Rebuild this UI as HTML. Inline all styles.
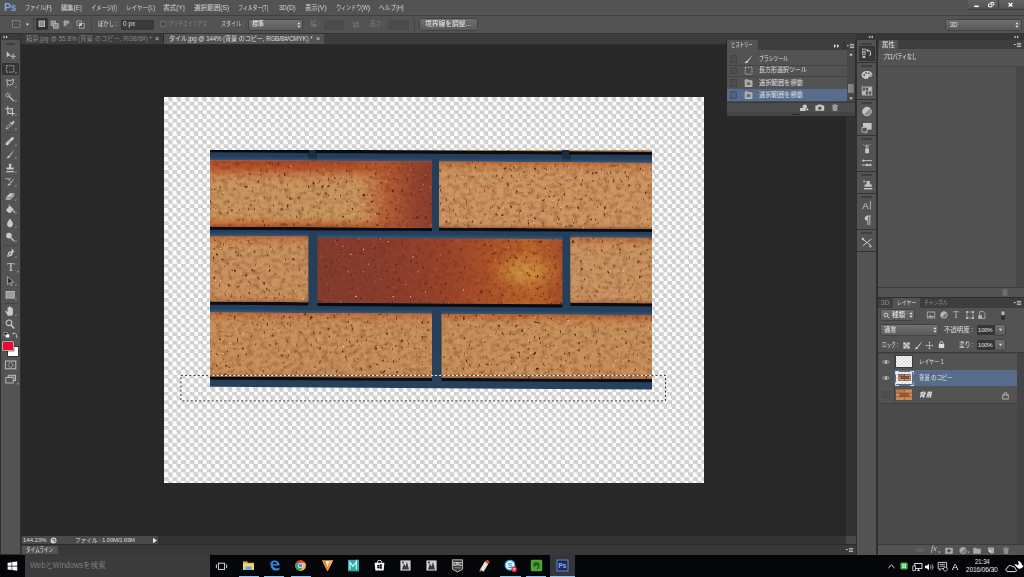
<!DOCTYPE html>
<html lang="ja">
<head>
<meta charset="utf-8">
<title>Photoshop</title>
<style>
html,body{margin:0;padding:0;background:#282828;overflow:hidden}
#app{position:relative;width:1024px;height:577px;overflow:hidden;background:#282828;font-family:"Liberation Sans","Noto Sans CJK JP",sans-serif}
#app div,#app svg,#app span.t{position:absolute;display:block}
#app span.t{white-space:nowrap;line-height:1;transform-origin:0 50%;will-change:transform}

</style>
</head>
<body>
<div id="app">
<div style="left:0px;top:0px;width:1024px;height:16px;background:#535353;"></div>
<div style="left:0px;top:15.3px;width:1024px;height:1px;background:#404040;"></div>
<span class="t" style="left:3.6px;top:2.30px;font-size:10.8px;color:#7eaade;transform:scaleX(0.952);font-weight:bold;letter-spacing:-0.3px">Ps</span>
<span class="t" style="left:25px;top:4.50px;font-size:6.8px;color:#dadada;transform:scaleX(0.739);">ファイル(F)</span>
<span class="t" style="left:61px;top:4.50px;font-size:6.8px;color:#dadada;transform:scaleX(0.927);">編集(E)</span>
<span class="t" style="left:91px;top:4.50px;font-size:6.8px;color:#dadada;transform:scaleX(0.777);">イメージ(I)</span>
<span class="t" style="left:126px;top:4.50px;font-size:6.8px;color:#dadada;transform:scaleX(0.822);">レイヤー(L)</span>
<span class="t" style="left:163px;top:4.50px;font-size:6.8px;color:#dadada;transform:scaleX(0.971);">書式(Y)</span>
<span class="t" style="left:194px;top:4.50px;font-size:6.8px;color:#dadada;transform:scaleX(0.966);">選択範囲(S)</span>
<span class="t" style="left:238px;top:4.50px;font-size:6.8px;color:#dadada;transform:scaleX(0.717);">フィルター(T)</span>
<span class="t" style="left:278.5px;top:4.50px;font-size:6.8px;color:#dadada;transform:scaleX(0.910);">3D(D)</span>
<span class="t" style="left:304.7px;top:4.50px;font-size:6.8px;color:#dadada;transform:scaleX(0.940);">表示(V)</span>
<span class="t" style="left:335.5px;top:4.50px;font-size:6.8px;color:#dadada;transform:scaleX(0.745);">ウィンドウ(W)</span>
<span class="t" style="left:378.5px;top:4.50px;font-size:6.8px;color:#dadada;transform:scaleX(0.838);">ヘルプ(H)</span>
<div style="left:968px;top:0px;width:56px;height:9.6px;background:#3c3c3c;"></div>
<div style="left:968.4px;top:0px;width:14.399999999999977px;height:9.2px;background:linear-gradient(#626262,#545454);"></div>
<div style="left:983.4px;top:0px;width:14.800000000000068px;height:9.2px;background:linear-gradient(#626262,#545454);"></div>
<div style="left:998.8px;top:0px;width:25.200000000000045px;height:9.2px;background:linear-gradient(#626262,#545454);"></div>
<svg style="left:968px;top:0px;" width="56" height="10" viewBox="0 0 56 10"><path d="M6.200 6.300h4.600" stroke="#fff" stroke-width="1.500"/><path d="M20.600 4h3.400v2.800h-3.400z M22.400 2.600h3.400v2.800" fill="none" stroke="#fff" stroke-width="1"/><path d="M40.600 3l3.800 3.400M44.400 3l-3.800 3.400" stroke="#fff" stroke-width="1.300"/></svg>
<div style="left:0px;top:16.3px;width:1024px;height:16.3px;background:#535353;"></div>
<div style="left:0px;top:32.6px;width:1024px;height:0.6px;background:#2e2e2e;"></div>
<svg style="left:11px;top:19px;" width="12" height="11" viewBox="0 0 12 11"><rect x="1.5" y="1.5" width="7.5" height="7" fill="none" stroke="#9a9a9a" stroke-width="0.9" stroke-dasharray="1.6 1.1"/></svg>
<svg style="left:25px;top:22px;" width="5" height="5" viewBox="0 0 5 5"><path d="M0.6 1.4h3.6L2.4 3.8z" fill="#cfcfcf"/></svg>
<div style="left:33px;top:18px;width:0.6px;height:13px;background:#444;"></div>
<div style="left:36px;top:18.3px;width:11.8px;height:11.6px;background:#333;border-radius:1px"></div>
<svg style="left:38px;top:20px;" width="8" height="8" viewBox="0 0 8 8"><rect x="1" y="1" width="5.6" height="5.4" fill="#8a8a8a" stroke="#c8c8c8" stroke-width="0.8"/></svg>
<svg style="left:50px;top:19.5px;" width="10" height="10" viewBox="0 0 10 10"><rect x="1" y="1" width="4.6" height="4.6" fill="#8a8a8a" stroke="#bdbdbd" stroke-width="0.7"/><rect x="3.6" y="3.6" width="4.6" height="4.6" fill="#8a8a8a" stroke="#bdbdbd" stroke-width="0.7"/></svg>
<svg style="left:63px;top:19.5px;" width="10" height="10" viewBox="0 0 10 10"><path d="M1 1h4.6v2.6H3.6v2H1z" fill="#9a9a9a" stroke="#bdbdbd" stroke-width="0.6"/><rect x="3.8" y="3.8" width="4.2" height="4.2" fill="none" stroke="#6c6c6c" stroke-width="0.6"/></svg>
<svg style="left:76px;top:19.5px;" width="10" height="10" viewBox="0 0 10 10"><rect x="1" y="1" width="4.6" height="4.6" fill="none" stroke="#bdbdbd" stroke-width="0.7"/><rect x="3.6" y="3.6" width="4.6" height="4.6" fill="none" stroke="#bdbdbd" stroke-width="0.7"/><rect x="3.6" y="3.6" width="2" height="2" fill="#ccc"/></svg>
<div style="left:91px;top:18px;width:0.6px;height:13px;background:#444;"></div>
<span class="t" style="left:98px;top:20.90px;font-size:6.8px;color:#dadada;transform:scaleX(0.786);">ぼかし :</span>
<div style="left:121px;top:19.5px;width:33px;height:10px;background:#3a3a3a;box-shadow:inset 0 0.6px 0 #2c2c2c;border-radius:1px"></div>
<span class="t" style="left:123px;top:21.20px;font-size:6.6px;color:#e4e4e4;transform:scaleX(0.962);">0 px</span>
<div style="left:160.3px;top:21.3px;width:6px;height:6px;background:#4a4a4a;border:0.6px solid #6a6a6a;box-sizing:border-box"></div>
<span class="t" style="left:169px;top:21.00px;font-size:6.6px;color:#858585;transform:scaleX(0.724);">アンチエイリアス</span>
<span class="t" style="left:221px;top:20.90px;font-size:6.8px;color:#dadada;transform:scaleX(0.743);">スタイル :</span>
<div style="left:249px;top:19.5px;width:53px;height:10px;background:linear-gradient(#727272,#5c5c5c);border-radius:1.5px;box-shadow:0 0 0 0.5px #333"></div>
<span class="t" style="left:252px;top:21.20px;font-size:6.6px;color:#f0f0f0;transform:scaleX(0.910);">標準</span>
<svg style="left:296px;top:20.5px;" width="6" height="8" viewBox="0 0 6 8"><path d="M1.4 3.2L3 1.2l1.6 2zM1.4 4.8L3 6.8l1.6-2z" fill="#e6e6e6"/></svg>
<span class="t" style="left:310px;top:21.00px;font-size:6.6px;color:#7e7e7e;transform:scaleX(0.974);">幅 :</span>
<div style="left:323.5px;top:19.5px;width:20.5px;height:10px;background:#4b4b4b;border-radius:1px"></div>
<svg style="left:351px;top:20px;" width="10" height="9" viewBox="0 0 10 9"><path d="M1.5 3.2h6M5.8 1.4l1.9 1.8-1.9 1.8M8.5 6h-6M4.2 4.2L2.3 6l1.9 1.8" fill="none" stroke="#7a7a7a" stroke-width="0.9"/></svg>
<span class="t" style="left:370px;top:21.00px;font-size:6.6px;color:#7e7e7e;transform:scaleX(0.872);">高さ :</span>
<div style="left:388px;top:19.5px;width:20.5px;height:10px;background:#4b4b4b;border-radius:1px"></div>
<div style="left:414px;top:18px;width:0.6px;height:13px;background:#444;"></div>
<div style="left:419.7px;top:19.3px;width:57px;height:10.4px;background:linear-gradient(#6f6f6f,#5a5a5a);border-radius:1.5px;box-shadow:0 0 0 0.5px #333"></div>
<span class="t" style="left:425px;top:21.20px;font-size:6.6px;color:#f0f0f0;transform:scaleX(1.021);">境界線を調整...</span>
<div style="left:946px;top:20px;width:75px;height:10px;background:linear-gradient(#6e6e6e,#595959);border-radius:1.5px;box-shadow:0 0 0 0.5px #333"></div>
<span class="t" style="left:949.5px;top:21.70px;font-size:6.6px;color:#f0f0f0;transform:scaleX(0.889);">3D</span>
<svg style="left:1014px;top:21px;" width="6" height="8" viewBox="0 0 6 8"><path d="M1.4 3.2L3 1.2l1.6 2zM1.4 4.8L3 6.8l1.6-2z" fill="#e6e6e6"/></svg>
<div style="left:0px;top:33.2px;width:1024px;height:7px;background:#333;"></div>
<div style="left:20.5px;top:34.2px;width:836px;height:9.8px;background:#3c3c3c;"></div>
<div style="left:163.4px;top:34.4px;width:160.2px;height:9.6px;background:#535353;"></div>
<div style="left:20.5px;top:44px;width:836px;height:1.6px;background:#2d2d2d;"></div>
<span class="t" style="left:26px;top:35.95px;font-size:6.5px;color:#8a8a8a;transform:scaleX(0.968);">箱染.jpg @ 55.8% (背景 のコピー, RGB/8#) *</span>
<span class="t" style="left:155.3px;top:35.25px;font-size:7.5px;color:#c8c8c8;transform:scaleX(1.000);">×</span>
<span class="t" style="left:168.5px;top:35.95px;font-size:6.5px;color:#e2e2e2;transform:scaleX(0.923);">タイル.jpg @ 144% (背景 のコピー, RGB/8#/CMYK) *</span>
<span class="t" style="left:316px;top:35.25px;font-size:7.5px;color:#d8d8d8;transform:scaleX(1.000);">×</span>
<div style="left:162.6px;top:34.4px;width:0.7px;height:9.6px;background:#2c2c2c;"></div>
<div style="left:20.5px;top:44.6px;width:836px;height:491.4px;background:#282828;"></div>
<div style="left:846.4px;top:45.6px;width:9.6px;height:490.4px;background:#323232;"></div>
<div style="left:0px;top:33.2px;width:21px;height:522px;background:#2f2f2f;"></div>
<div style="left:1px;top:40px;width:19.2px;height:514px;background:#535353;"></div>
<div style="left:1px;top:33.5px;width:19.2px;height:6.5px;background:#3a3a3a;"></div>
<svg style="left:3px;top:35px;" width="8" height="4" viewBox="0 0 8 4"><path d="M0.5 0.5L2.3 2 0.5 3.5zM3 0.5L4.8 2 3 3.5z" fill="#d0d0d0"/></svg>
<div style="left:6px;top:42.5px;width:9px;height:0.7px;background:#3e3e3e;"></div>
<div style="left:6px;top:44px;width:9px;height:0.7px;background:#3e3e3e;"></div>
<div style="left:2.4px;top:62.8px;width:16.4px;height:12px;background:#383838;border-radius:1.5px;box-shadow:inset 0 0 0 0.5px #2c2c2c"></div>
<svg style="left:3.2px;top:47.6px;" width="15" height="14" viewBox="0 0 15 14"><g transform="translate(7 7) scale(0.86) translate(-7 -7)"><path d="M3.2 2.6v7.2l2-1.9 2.6-.1z" fill="#c9c9c9"/><path d="M10.6 6v5M8.1 8.5h5" stroke="#c9c9c9" stroke-width="0.9"/><path d="M10.6 5.2l-1 1.2h2zM10.6 11.8l-1-1.2h2zM7.3 8.5l1.2-1v2zM13.9 8.5l-1.2-1v2z" fill="#c9c9c9"/></g></svg>
<svg style="left:3.2px;top:61.5px;" width="15" height="14" viewBox="0 0 15 14"><g transform="translate(7 7) scale(0.86) translate(-7 -7)"><rect x="3" y="3.2" width="8.4" height="7.4" fill="none" stroke="#c9c9c9" stroke-width="0.9" stroke-dasharray="1.7 1.1"/><path d="M12.6 12.2h1.8v-1.8z" fill="#bdbdbd"/></g></svg>
<svg style="left:3.2px;top:76.4px;" width="15" height="14" viewBox="0 0 15 14"><g transform="translate(7 7) scale(0.86) translate(-7 -7)"><path d="M3 3.2l3.6 1.2 4.6-1.6-1.2 5.4-3.4 1.4-2.4-1.6z" fill="none" stroke="#c9c9c9" stroke-width="1"/><path d="M4.2 8.2c-1.2.8-1 2.4.4 3.2" fill="none" stroke="#c9c9c9" stroke-width="0.9"/><path d="M12.6 12.2h1.8v-1.8z" fill="#bdbdbd"/></g></svg>
<svg style="left:3.2px;top:90.3px;" width="15" height="14" viewBox="0 0 15 14"><g transform="translate(7 7) scale(0.86) translate(-7 -7)"><path d="M5.2 5.4l6.2 6.4" stroke="#c9c9c9" stroke-width="1.5"/><path d="M4.4 1.6v2.2M4.4 6v1.8M1.4 4.8h2M5.6 4.8h2M2.3 2.7l1.2 1.2M6.5 2.7L5.3 3.9M2.3 6.9l1.2-1.2" stroke="#c9c9c9" stroke-width="0.8"/><path d="M12.6 12.2h1.8v-1.8z" fill="#bdbdbd"/></g></svg>
<svg style="left:3.2px;top:104px;" width="15" height="14" viewBox="0 0 15 14"><g transform="translate(7 7) scale(0.86) translate(-7 -7)"><path d="M4.4 1.6v8.2h8.2M1.6 4.4h8.2v8.2" fill="none" stroke="#c9c9c9" stroke-width="1.2"/><path d="M3 11.2l8.4-8.4" stroke="#c9c9c9" stroke-width="0.6"/><path d="M12.6 12.2h1.8v-1.8z" fill="#bdbdbd"/></g></svg>
<svg style="left:3.2px;top:118px;" width="15" height="14" viewBox="0 0 15 14"><g transform="translate(7 7) scale(0.86) translate(-7 -7)"><path d="M2.6 11.6l.6-2.2 4.6-4.6 1.6 1.6-4.6 4.6z" fill="none" stroke="#c9c9c9" stroke-width="0.9"/><path d="M7.2 3.8l3.2 3.2M8.4 5.2l2-2.4c.8-.8 2 .4 1.2 1.2l-2.2 2.2z" fill="#c9c9c9" stroke="#c9c9c9" stroke-width="0.9"/><path d="M12.6 12.2h1.8v-1.8z" fill="#bdbdbd"/></g></svg>
<div style="left:3.5px;top:132.3px;width:14px;height:0.7px;background:#444;"></div>
<svg style="left:3.2px;top:133.7px;" width="15" height="14" viewBox="0 0 15 14"><g transform="translate(7 7) scale(0.86) translate(-7 -7)"><path d="M2.2 9.4l6.6-6.6c1.6-1.4 3.6.6 2.4 2.2l-6.6 6.6c-1.6 1.4-3.8-.6-2.4-2.2z" fill="#c9c9c9"/><path d="M5.6 7.6l2 2M6.8 6.4l2 2" stroke="#555" stroke-width="0.6"/><path d="M12.6 12.2h1.8v-1.8z" fill="#bdbdbd"/></g></svg>
<svg style="left:3.2px;top:147px;" width="15" height="14" viewBox="0 0 15 14"><g transform="translate(7 7) scale(0.86) translate(-7 -7)"><path d="M12 1.8L6.4 8.2l1 1z" fill="#c9c9c9"/><path d="M5.8 8.6l1.4 1.4c-.6 1.6-2.6 2.2-4.6 1.8 1.4-.6 1.4-2.6 3.2-3.2z" fill="#c9c9c9"/><path d="M12.6 12.2h1.8v-1.8z" fill="#bdbdbd"/></g></svg>
<svg style="left:3.2px;top:160.8px;" width="15" height="14" viewBox="0 0 15 14"><g transform="translate(7 7) scale(0.86) translate(-7 -7)"><path d="M5.6 2.2h3.2l-.6 4.2h3v2.4H3V6.400h3z" fill="#c9c9c9"/><path d="M2.6 10.4h9v1.4h-9z" fill="#c9c9c9"/><path d="M12.6 12.2h1.8v-1.8z" fill="#bdbdbd"/></g></svg>
<svg style="left:3.2px;top:174.7px;" width="15" height="14" viewBox="0 0 15 14"><g transform="translate(7 7) scale(0.86) translate(-7 -7)"><path d="M12.2 2.4L7 8l.9.9z" fill="#c9c9c9"/><path d="M6.4 8.400l1.300 1.300c-.6 1.400-2.300 1.900-4 1.600 1.200-.6 1.200-2.300 2.700-2.900z" fill="#c9c9c9"/><path d="M2 3.200h5.400l-1.800 2.600" fill="none" stroke="#c9c9c9" stroke-width="0.9"/><path d="M12.6 12.2h1.8v-1.8z" fill="#bdbdbd"/></g></svg>
<svg style="left:3.2px;top:188.5px;" width="15" height="14" viewBox="0 0 15 14"><g transform="translate(7 7) scale(0.86) translate(-7 -7)"><path d="M2 8.600l5-4.800h5.200l-5 4.800z" fill="#c9c9c9"/><path d="M2 9.200h5.200l5-4.800v2.400l-5 4.800H2z" fill="#a8a8a8"/><path d="M12.6 12.2h1.8v-1.8z" fill="#bdbdbd"/></g></svg>
<svg style="left:3.2px;top:202px;" width="15" height="14" viewBox="0 0 15 14"><g transform="translate(7 7) scale(0.86) translate(-7 -7)"><path d="M3.200 7l3.800-3.800 4.400 4.400-3.800 3.800c-.8.600-1.600.600-2.200 0L3.200 9.200c-.6-.8-.6-1.400 0-2.200z" fill="#c9c9c9"/><path d="M6.400 1.400c-1 1.200-.8 2.400.4 3.400" fill="none" stroke="#c9c9c9" stroke-width="0.8"/><path d="M11.800 8.200c.8 1.200 1.200 2 .6 2.800-.6.600-1.600.2-1.600-.8 0-.6.400-1.200 1-2z" fill="#c9c9c9"/><path d="M12.6 12.2h1.8v-1.8z" fill="#bdbdbd"/></g></svg>
<svg style="left:3.2px;top:216px;" width="15" height="14" viewBox="0 0 15 14"><g transform="translate(7 7) scale(0.86) translate(-7 -7)"><path d="M7 1.800c2 2.800 3.400 4.600 3.400 6.600 0 2-1.500 3.400-3.400 3.400S3.600 10.400 3.600 8.400c0-2 1.400-3.800 3.400-6.600z" fill="#c9c9c9"/><path d="M12.6 12.2h1.8v-1.8z" fill="#bdbdbd"/></g></svg>
<svg style="left:3.2px;top:229.9px;" width="15" height="14" viewBox="0 0 15 14"><g transform="translate(7 7) scale(0.86) translate(-7 -7)"><circle cx="5.800" cy="5.400" r="3.300" fill="#c9c9c9"/><path d="M8 7.800l3.800 4" stroke="#c9c9c9" stroke-width="1.600"/><path d="M12.6 12.2h1.8v-1.8z" fill="#bdbdbd"/></g></svg>
<div style="left:3.5px;top:244.6px;width:14px;height:0.7px;background:#444;"></div>
<svg style="left:3.2px;top:245.5px;" width="15" height="14" viewBox="0 0 15 14"><g transform="translate(7 7) scale(0.86) translate(-7 -7)"><path d="M8.800 1.600l3.200 3.200-1.400 1.200-1.200 4-6.200 2 2-6.200 4-1.200z" fill="#c9c9c9"/><path d="M3.600 11.400l3.400-3.400" stroke="#555" stroke-width="0.7"/><circle cx="7.300" cy="7.700" r="0.900" fill="#555"/><path d="M12.6 12.2h1.8v-1.8z" fill="#bdbdbd"/></g></svg>
<svg style="left:3.5px;top:259.5px;" width="15" height="14" viewBox="0 0 15 14"><text x="6.800" y="11.400" font-family="Liberation Serif,serif" font-size="12.500" text-anchor="middle" fill="#c9c9c9">T</text><path d="M12.600 12.200h1.800v-1.800z" fill="#bdbdbd"/></svg>
<svg style="left:3.2px;top:274px;" width="15" height="14" viewBox="0 0 15 14"><g transform="translate(7 7) scale(0.86) translate(-7 -7)"><path d="M4.200 1.800v9.400l2.300-2.300 1.500 3.400 1.500-.7-1.500-3.300h3.200z" fill="#2a2a2a" stroke="#c9c9c9" stroke-width="0.800"/><path d="M12.6 12.2h1.8v-1.8z" fill="#bdbdbd"/></g></svg>
<svg style="left:3.2px;top:288px;" width="15" height="14" viewBox="0 0 15 14"><g transform="translate(7 7) scale(0.86) translate(-7 -7)"><rect x="2.400" y="3" width="9.600" height="7.600" fill="#9a9a9a" stroke="#c9c9c9" stroke-width="0.900"/><path d="M12.6 12.2h1.8v-1.8z" fill="#bdbdbd"/></g></svg>
<div style="left:3.5px;top:302.6px;width:14px;height:0.7px;background:#444;"></div>
<svg style="left:3.2px;top:303.5px;" width="15" height="14" viewBox="0 0 15 14"><g transform="translate(7 7) scale(0.86) translate(-7 -7)"><path d="M4.600 12.400c-1-1.600-2.400-3.400-3-4.600-.4-1 .8-1.600 1.600-.600l1 1.200V3.200c0-1 1.400-1 1.500 0V6.400 2.300c.1-1 1.500-1 1.600 0V6.400 2.900c.1-1 1.500-1 1.600 0v3.800-2.400c.1-.9 1.400-.9 1.500 0v4.900c0 1.400-.6 2.300-1.200 3.200z" fill="#c9c9c9"/><path d="M12.6 12.2h1.8v-1.8z" fill="#bdbdbd"/></g></svg>
<svg style="left:3.2px;top:316.7px;" width="15" height="14" viewBox="0 0 15 14"><g transform="translate(7 7) scale(0.86) translate(-7 -7)"><circle cx="5.800" cy="5.600" r="3.300" fill="none" stroke="#c9c9c9" stroke-width="1.300"/><path d="M8.200 8.200l3.800 4" stroke="#c9c9c9" stroke-width="1.700"/></g></svg>
<svg style="left:3px;top:330.5px;" width="16" height="8" viewBox="0 0 16 8"><rect x="1" y="1.400" width="3.400" height="3.400" fill="#1a1a1a" stroke="#d0d0d0" stroke-width="0.500"/><rect x="2.800" y="3.200" width="3.400" height="3.400" fill="#fff" stroke="#888" stroke-width="0.400"/><path d="M10 2.400c2-1 3.600.4 3.600 2.600" fill="none" stroke="#c8c8c8" stroke-width="0.800"/><path d="M9 2.800l1.800-1.400.2 2zM12.600 5.200l2 .1-1.100 1.600z" fill="#c8c8c8"/></svg>
<div style="left:8px;top:346.6px;width:9.8px;height:9.6px;background:#fff;box-shadow:0 0 0 0.600px #222"></div>
<div style="left:2.8px;top:341.6px;width:9.8px;height:8.6px;background:#ee0a2c;box-shadow:0 0 0 0.700px #ddd, 0 0 0 1.300px #333"></div>
<svg style="left:4px;top:358.5px;" width="14" height="12" viewBox="0 0 14 12"><rect x="1.400" y="2" width="10.400" height="7.800" fill="none" stroke="#c9c9c9" stroke-width="0.900"/><circle cx="6.600" cy="5.900" r="2.300" fill="none" stroke="#c9c9c9" stroke-width="0.900" stroke-dasharray="1.200 0.800"/></svg>
<svg style="left:3.5px;top:372.3px;" width="15" height="14" viewBox="0 0 15 14"><rect x="4.200" y="3.200" width="7.400" height="5.400" fill="#777" stroke="#c9c9c9" stroke-width="0.800"/><rect x="1.800" y="5.600" width="7.400" height="5.400" fill="#555" stroke="#c9c9c9" stroke-width="0.800"/><path d="M12.600 12.200h1.800v-1.800z" fill="#bdbdbd"/></svg>
<div style="left:164px;top:96.5px;width:540px;height:386px;background:repeating-conic-gradient(#d0d0d0 0 25%,#fdfdfd 0 50%) 0 0/8.533px 8.533px;"></div>
<svg style="left:210px;top:150px;" width="442" height="240" viewBox="0 0 442 240"><defs><clipPath id="imgclip"><path d="M0 0H442V239.6L0 236.7z"/></clipPath><linearGradient id="edgeV" x1="0" y1="0" x2="0" y2="1"><stop offset="0" stop-color="#b9602f" stop-opacity="0.8"/><stop offset="0.08" stop-color="#c4713c" stop-opacity="0.4"/><stop offset="0.18" stop-color="#c98a50" stop-opacity="0"/><stop offset="0.9" stop-color="#c98a50" stop-opacity="0"/><stop offset="0.96" stop-color="#b87040" stop-opacity="0.35"/><stop offset="1" stop-color="#9a5a34" stop-opacity="0.8"/></linearGradient><linearGradient id="b1v" x1="0" y1="0" x2="0" y2="1"><stop offset="0" stop-color="#a84628" stop-opacity="1"/><stop offset="0.12" stop-color="#b8542c" stop-opacity="0.95"/><stop offset="0.34" stop-color="#cc8448" stop-opacity="0"/><stop offset="0.84" stop-color="#c98a50" stop-opacity="0"/><stop offset="0.93" stop-color="#c26c38" stop-opacity="0.7"/><stop offset="1" stop-color="#b05028" stop-opacity="1"/></linearGradient><linearGradient id="b1h" x1="0" y1="0" x2="1" y2="0"><stop offset="0" stop-color="#c4642f" stop-opacity="0.9"/><stop offset="0.03" stop-color="#c98448" stop-opacity="0"/><stop offset="0.66" stop-color="#c4703a" stop-opacity="0"/><stop offset="0.8" stop-color="#b05430" stop-opacity="0.85"/><stop offset="0.92" stop-color="#98442e" stop-opacity="1"/><stop offset="1" stop-color="#8c3e30" stop-opacity="1"/></linearGradient><linearGradient id="b4" x1="0" y1="0" x2="1" y2="0"><stop offset="0" stop-color="#843c30" stop-opacity="1"/><stop offset="0.3" stop-color="#8c3d2e" stop-opacity="1"/><stop offset="0.52" stop-color="#9a432a" stop-opacity="1"/><stop offset="0.7" stop-color="#ae5229" stop-opacity="1"/><stop offset="0.88" stop-color="#be642c" stop-opacity="1"/><stop offset="1" stop-color="#a84e2a" stop-opacity="1"/></linearGradient><linearGradient id="b7v" x1="0" y1="0" x2="0" y2="1"><stop offset="0" stop-color="#bc6a36" stop-opacity="0.95"/><stop offset="0.14" stop-color="#c88848" stop-opacity="0"/><stop offset="1" stop-color="#c88848" stop-opacity="0"/></linearGradient><radialGradient id="b4s" cx="0.85" cy="0.5" r="0.5" gradientTransform="translate(0.85 0.5) scale(0.34 0.72) translate(-0.85 -0.5)"><stop offset="0" stop-color="#cf9a44" stop-opacity="0.95"/><stop offset="0.45" stop-color="#cc8a3c" stop-opacity="0.7"/><stop offset="1" stop-color="#c0682e" stop-opacity="0"/></radialGradient><linearGradient id="mort" x1="0" y1="0" x2="0" y2="1"><stop offset="0" stop-color="#243d58" stop-opacity="1"/><stop offset="1" stop-color="#27415c" stop-opacity="1"/></linearGradient><linearGradient id="hl" x1="0" y1="0" x2="0" y2="1"><stop offset="0" stop-color="#385c82" stop-opacity="0"/><stop offset="0.6" stop-color="#385c82" stop-opacity="0.5"/><stop offset="1" stop-color="#3e668e" stop-opacity="0.75"/></linearGradient>
<filter id="spk" x="0" y="0" width="100%" height="100%" color-interpolation-filters="sRGB">
<feTurbulence type="fractalNoise" baseFrequency="0.34 0.26" numOctaves="2" seed="7" result="n"/>
<feColorMatrix in="n" type="matrix" values="0 0 0 0 0.34  0 0 0 0 0.16  0 0 0 0 0.07  -7 0 0 0 2.35" result="d"/>
<feComposite in="d" in2="SourceGraphic" operator="in"/>
</filter>
<filter id="lit" x="0" y="0" width="100%" height="100%" color-interpolation-filters="sRGB">
<feTurbulence type="fractalNoise" baseFrequency="0.4" numOctaves="1" seed="21" result="n"/>
<feColorMatrix in="n" type="matrix" values="0 0 0 0 0.96  0 0 0 0 0.84  0 0 0 0 0.70  0 9 0 0 -6.5" result="d"/>
<feComposite in="d" in2="SourceGraphic" operator="in"/>
</filter>
<filter id="tone" x="0" y="0" width="100%" height="100%" color-interpolation-filters="sRGB">
<feTurbulence type="fractalNoise" baseFrequency="0.16 0.24" numOctaves="2" seed="4" result="n"/>
<feColorMatrix in="n" type="matrix" values="0 0 0 0 0.42  0 0 0 0 0.20  0 0 0 0 0.08  0.9 0 0 0 -0.38" result="d"/>
<feComposite in="d" in2="SourceGraphic" operator="in"/>
</filter>
</defs><g clip-path="url(#imgclip)"><rect x="0" y="0" width="442" height="240" fill="url(#mort)"/><rect x="0" y="0" width="442" height="1.2" fill="#101820"/><g transform="matrix(1 0.0061 0 1 0 0)"><rect x="98" y="-2" width="9" height="12.4" fill="#1a2c40"/><rect x="352" y="-2" width="8.4" height="12.4" fill="#1a2c40"/><rect x="-4" y="5.999999999999999" width="226.0" height="4.4" fill="url(#hl)"/><rect x="229" y="5.999999999999999" width="221.0" height="4.4" fill="url(#hl)"/><rect x="-4" y="81.8" width="102.3" height="4.4" fill="url(#hl)"/><rect x="107.5" y="82.8" width="244.9" height="4.4" fill="url(#hl)"/><rect x="360.3" y="81.0" width="89.7" height="4.4" fill="url(#hl)"/><rect x="-4" y="158.3" width="226.0" height="4.4" fill="url(#hl)"/><rect x="231.6" y="158.4" width="218.4" height="4.4" fill="url(#hl)"/><rect x="-4" y="76.1" width="226.0" height="3.6" fill="#05080c" opacity="0.9"/><rect x="229" y="75.8" width="221.0" height="3.6" fill="#05080c" opacity="0.9"/><rect x="-4" y="151.2" width="102.3" height="3.6" fill="#05080c" opacity="0.9"/><rect x="107.5" y="151.79999999999998" width="244.9" height="3.6" fill="#05080c" opacity="0.9"/><rect x="360.3" y="150.2" width="89.7" height="3.6" fill="#05080c" opacity="0.9"/><rect x="-4" y="226.1" width="226.0" height="3.6" fill="#05080c" opacity="0.9"/><rect x="231.6" y="226.0" width="218.4" height="3.6" fill="#05080c" opacity="0.9"/><rect x="-4" y="-1.3" width="103.0" height="3.6" fill="#05080c" opacity="0.9"/><rect x="106" y="-1.3" width="246.0" height="3.6" fill="#05080c" opacity="0.9"/><rect x="359" y="-1.3" width="91.0" height="3.6" fill="#05080c" opacity="0.9"/><rect x="-4" y="10.2" width="226.0" height="66.3" rx="1.2" fill="#ca9660" /><rect x="229" y="10.2" width="221.0" height="66.0" rx="1.2" fill="#cc9562" /><rect x="-4" y="86" width="102.3" height="65.6" rx="1.2" fill="#c99260" /><rect x="107.5" y="87" width="244.9" height="65.2" rx="1.2" fill="url(#b4)" /><rect x="360.3" y="85.2" width="89.7" height="65.4" rx="1.2" fill="#ca9462" /><rect x="-4" y="162.5" width="226.0" height="64.0" rx="1.2" fill="#c7905c" /><rect x="231.6" y="162.6" width="218.4" height="63.8" rx="1.2" fill="#c8915c" /><rect x="-4" y="-60" width="103.0" height="59.1" rx="1.2" fill="#c99a63" /><rect x="106" y="-60" width="246.0" height="59.1" rx="1.2" fill="#c99a63" /><rect x="359" y="-60" width="91.0" height="59.1" rx="1.2" fill="#c99a63" /><rect x="229" y="10.2" width="221.0" height="66.0" rx="1.2" fill="url(#edgeV)" /><rect x="-4" y="86" width="102.3" height="65.6" rx="1.2" fill="url(#edgeV)" /><rect x="360.3" y="85.2" width="89.7" height="65.4" rx="1.2" fill="url(#edgeV)" /><rect x="-4" y="162.5" width="226.0" height="64.0" rx="1.2" fill="url(#edgeV)" /><rect x="231.6" y="162.6" width="218.4" height="63.8" rx="1.2" fill="url(#b7v)" /><rect x="231.6" y="162.6" width="218.4" height="63.8" rx="1.2" fill="url(#edgeV)" /><rect x="-4" y="10.2" width="226.0" height="66.3" rx="1.2" fill="url(#b1v)" /><rect x="-4" y="10.2" width="226.0" height="66.3" rx="1.2" fill="url(#b1h)" /><rect x="107.5" y="87" width="244.9" height="65.2" rx="1.2" fill="url(#b4s)" /><g filter="url(#tone)"><rect x="-4" y="10.2" width="226.0" height="66.3" rx="1.2" fill="#000" /><rect x="229" y="10.2" width="221.0" height="66.0" rx="1.2" fill="#000" /><rect x="-4" y="86" width="102.3" height="65.6" rx="1.2" fill="#000" /><rect x="107.5" y="87" width="244.9" height="65.2" rx="1.2" fill="#000" /><rect x="360.3" y="85.2" width="89.7" height="65.4" rx="1.2" fill="#000" /><rect x="-4" y="162.5" width="226.0" height="64.0" rx="1.2" fill="#000" /><rect x="231.6" y="162.6" width="218.4" height="63.8" rx="1.2" fill="#000" /><rect x="-4" y="-60" width="103.0" height="59.1" rx="1.2" fill="#000" /><rect x="106" y="-60" width="246.0" height="59.1" rx="1.2" fill="#000" /><rect x="359" y="-60" width="91.0" height="59.1" rx="1.2" fill="#000" /></g><g filter="url(#spk)"><rect x="-4" y="10.2" width="226.0" height="66.3" rx="1.2" fill="#000" /><rect x="229" y="10.2" width="221.0" height="66.0" rx="1.2" fill="#000" /><rect x="-4" y="86" width="102.3" height="65.6" rx="1.2" fill="#000" /><rect x="107.5" y="87" width="244.9" height="65.2" rx="1.2" fill="#000" /><rect x="360.3" y="85.2" width="89.7" height="65.4" rx="1.2" fill="#000" /><rect x="-4" y="162.5" width="226.0" height="64.0" rx="1.2" fill="#000" /><rect x="231.6" y="162.6" width="218.4" height="63.8" rx="1.2" fill="#000" /><rect x="-4" y="-60" width="103.0" height="59.1" rx="1.2" fill="#000" /><rect x="106" y="-60" width="246.0" height="59.1" rx="1.2" fill="#000" /><rect x="359" y="-60" width="91.0" height="59.1" rx="1.2" fill="#000" /></g><g filter="url(#lit)"><rect x="-4" y="10.2" width="226.0" height="66.3" rx="1.2" fill="#000" /><rect x="229" y="10.2" width="221.0" height="66.0" rx="1.2" fill="#000" /><rect x="-4" y="86" width="102.3" height="65.6" rx="1.2" fill="#000" /><rect x="107.5" y="87" width="244.9" height="65.2" rx="1.2" fill="#000" /><rect x="360.3" y="85.2" width="89.7" height="65.4" rx="1.2" fill="#000" /><rect x="-4" y="162.5" width="226.0" height="64.0" rx="1.2" fill="#000" /><rect x="231.6" y="162.6" width="218.4" height="63.8" rx="1.2" fill="#000" /><rect x="-4" y="-60" width="103.0" height="59.1" rx="1.2" fill="#000" /><rect x="106" y="-60" width="246.0" height="59.1" rx="1.2" fill="#000" /><rect x="359" y="-60" width="91.0" height="59.1" rx="1.2" fill="#000" /></g></g></g></svg>
<svg style="left:179px;top:373px;" width="490" height="31" viewBox="0 0 490 31"><rect x="1.9" y="2.4" width="484.6" height="25.5" fill="none" stroke="#fff" stroke-width="0.9"/><rect x="1.9" y="2.4" width="484.6" height="25.5" fill="none" stroke="#222" stroke-width="0.9" stroke-dasharray="2.1 2.1"/></svg>
<div style="left:20.5px;top:536px;width:836px;height:8.2px;background:#333;"></div>
<div style="left:22px;top:536.2px;width:136px;height:7.8px;background:#4a4a4a;"></div>
<div style="left:846.4px;top:536px;width:9.6px;height:8.2px;background:#484848;"></div>
<span class="t" style="left:23.4px;top:536.80px;font-size:6.2px;color:#e0e0e0;transform:scaleX(0.966);">144.23%</span>
<svg style="left:50px;top:536.6px;" width="7" height="7" viewBox="0 0 7 7"><circle cx="3.5" cy="3.5" r="3" fill="#cfcfcf"/><path d="M2 2.600h2.800v2.600" fill="none" stroke="#444" stroke-width="0.800"/></svg>
<span class="t" style="left:75.2px;top:536.80px;font-size:6.2px;color:#e0e0e0;transform:scaleX(0.909);">ファイル : 1.00M/2.69M</span>
<svg style="left:151.5px;top:536.8px;" width="6" height="7" viewBox="0 0 6 7"><path d="M1 0.800L5 3.500 1 6.200z" fill="#e6e6e6"/></svg>
<div style="left:20.5px;top:544.2px;width:836px;height:11px;background:#383838;"></div>
<div style="left:20.5px;top:544.2px;width:836px;height:0.8px;background:#2a2a2a;"></div>
<div style="left:22px;top:545.8px;width:35.5px;height:8.7px;background:#535353;"></div>
<svg style="left:845px;top:547.4px;" width="9" height="6" viewBox="0 0 9 6"><path d="M0.600 2h2.400L1.800 3.600z" fill="#d6d6d6"/><path d="M3.800 1.400h4.400M3.800 3h4.400M3.800 4.600h4.400" stroke="#d6d6d6" stroke-width="0.800"/></svg>
<span class="t" style="left:25.8px;top:547.20px;font-size:6.4px;color:#e0e0e0;transform:scaleX(0.718);">タイムライン</span>
<div style="left:726.4px;top:39.6px;width:129.6px;height:77px;background:#2a2a2a;"></div>
<div style="left:727px;top:40.2px;width:128.4px;height:9.6px;background:#3e3e3e;"></div>
<div style="left:727px;top:40.2px;width:30.5px;height:9.8px;background:#535353;border-radius:1px 1px 0 0"></div>
<span class="t" style="left:731px;top:42.20px;font-size:6.4px;color:#e6e6e6;transform:scaleX(0.682);">ヒストリー</span>
<svg style="left:833px;top:42.5px;" width="8" height="6" viewBox="0 0 8 6"><path d="M1 1l2.200 2L1 5zM4 1l2.200 2L4 5z" fill="#dcdcdc"/></svg>
<div style="left:843.5px;top:41.3px;width:0.6px;height:7.4px;background:#2c2c2c;"></div>
<svg style="left:846px;top:42.5px;" width="9" height="6" viewBox="0 0 9 6"><path d="M0.600 2h2.400L1.800 3.600z" fill="#d6d6d6"/><path d="M3.800 1.400h4.400M3.800 3h4.400M3.800 4.600h4.400" stroke="#d6d6d6" stroke-width="0.800"/></svg>
<div style="left:727px;top:50.4px;width:128.4px;height:51.2px;background:#535353;"></div>
<div style="left:727px;top:64.7px;width:120px;height:0.7px;background:#444;"></div>
<div style="left:730.6px;top:55.800000000000004px;width:5.8px;height:5.8px;background:#4c4c4c;box-shadow:0 0 0 0.600px #3a3a3a"></div>
<span class="t" style="left:758.75px;top:55.60px;font-size:6.4px;color:#e4e4e4;transform:scaleX(0.765);">ブラシツール</span>
<div style="left:727px;top:76.39999999999999px;width:120px;height:0.7px;background:#444;"></div>
<div style="left:730.6px;top:67.5px;width:5.8px;height:5.8px;background:#4c4c4c;box-shadow:0 0 0 0.600px #3a3a3a"></div>
<span class="t" style="left:758.75px;top:67.30px;font-size:6.4px;color:#e4e4e4;transform:scaleX(0.938);">長方形選択ツール</span>
<div style="left:727px;top:88.69999999999999px;width:120px;height:0.7px;background:#444;"></div>
<div style="left:730.6px;top:79.8px;width:5.8px;height:5.8px;background:#4c4c4c;box-shadow:0 0 0 0.600px #3a3a3a"></div>
<span class="t" style="left:758.75px;top:79.60px;font-size:6.4px;color:#e4e4e4;transform:scaleX(0.985);">選択範囲を移動</span>
<div style="left:727px;top:88.8px;width:120px;height:12.6px;background:#586d8c;"></div>
<div style="left:727px;top:100.89999999999999px;width:120px;height:0.7px;background:#3c4a5e;"></div>
<div style="left:730.6px;top:92.0px;width:5.8px;height:5.8px;background:#4d6283;box-shadow:0 0 0 0.600px #3a3a3a"></div>
<span class="t" style="left:758.75px;top:91.80px;font-size:6.4px;color:#e4e4e4;transform:scaleX(0.985);">選択範囲を移動</span>
<svg style="left:743px;top:53.5px;" width="11" height="10" viewBox="0 0 11 10"><path d="M9.800 0.800L4.600 6.200l.8.800z" fill="#e0e0e0"/><path d="M4 6.600l1.200 1.200c-.6 1.200-2 1.600-3.600 1.400 1-.5 1-1.900 2.400-2.600z" fill="#e0e0e0"/></svg>
<svg style="left:743.5px;top:65.8px;" width="10" height="10" viewBox="0 0 10 10"><rect x="1.200" y="1.200" width="6.800" height="7" fill="none" stroke="#d0d0d0" stroke-width="0.800" stroke-dasharray="1.500 1.100"/></svg>
<svg style="left:743.5px;top:78px;" width="10" height="10" viewBox="0 0 10 10"><path d="M1.200 1.800h2.600l.8 1h3.400v5.600H1.200z" fill="#9a9a9a" stroke="#d6d6d6" stroke-width="0.700"/><rect x="2.400" y="4" width="4.400" height="3.200" fill="#6a6a6a" stroke="#cfcfcf" stroke-width="0.400"/></svg>
<svg style="left:743.5px;top:90.3px;" width="10" height="10" viewBox="0 0 10 10"><path d="M1.200 1.800h2.600l.8 1h3.400v5.600H1.200z" fill="#9a9a9a" stroke="#d6d6d6" stroke-width="0.700"/><rect x="2.400" y="4" width="4.400" height="3.200" fill="#6a6a6a" stroke="#cfcfcf" stroke-width="0.400"/></svg>
<div style="left:847.2px;top:50.4px;width:8.2px;height:51.2px;background:#474747;"></div>
<svg style="left:848.3px;top:52px;" width="6" height="5" viewBox="0 0 6 5"><path d="M3 1.200L4.800 3.600H1.200z" fill="#dcdcdc"/></svg>
<svg style="left:848.3px;top:95.6px;" width="6" height="5" viewBox="0 0 6 5"><path d="M3 3.800L4.800 1.400H1.200z" fill="#dcdcdc"/></svg>
<div style="left:848px;top:83.5px;width:6.4px;height:9.6px;background:linear-gradient(90deg,#8a8a8a,#777);border-radius:1px"></div>
<div style="left:727px;top:101.6px;width:128.4px;height:10.2px;background:#4c4c4c;"></div>
<div style="left:727px;top:101.6px;width:128.4px;height:0.6px;background:#3a3a3a;"></div>
<svg style="left:798px;top:102.8px;" width="12" height="9" viewBox="0 0 12 9"><path d="M2 5h5.600v3H2z" fill="#c8c8c8"/><circle cx="6.800" cy="3.600" r="2.200" fill="#c8c8c8"/><path d="M8 6.400h2.400M9.200 5.200v2.400" stroke="#e0e0e0" stroke-width="0.800"/></svg>
<svg style="left:814px;top:102.8px;" width="12" height="9" viewBox="0 0 12 9"><path d="M1.400 2.600h2l.8-1h3.200l.8 1h2v5.200H1.400z" fill="#c8c8c8"/><circle cx="5.800" cy="5.200" r="1.600" fill="#4c4c4c"/></svg>
<svg style="left:830px;top:102.8px;" width="10" height="9" viewBox="0 0 10 9"><path d="M2.400 2.800h5.200l-.5 5.200H2.900z" fill="#9a9a9a"/><path d="M1.800 2.400h6.400M3.800 1.400h2.400" stroke="#a6a6a6" stroke-width="0.800"/></svg>
<div style="left:727px;top:111.8px;width:128.4px;height:4.2px;background:#444;"></div>
<div style="left:792px;top:113.5px;width:8px;height:0.8px;background:#2c2c2c;"></div>
<div style="left:856px;top:33.2px;width:168px;height:522px;background:#2f2f2f;"></div>
<div style="left:856px;top:33.2px;width:168px;height:6.8px;background:#363636;"></div>
<svg style="left:868px;top:35px;" width="8" height="4" viewBox="0 0 8 4"><path d="M2.300 0.500L0.500 2l1.800 1.500zM4.800 0.500L3 2l1.800 1.500z" fill="#d0d0d0"/></svg>
<svg style="left:1014px;top:35px;" width="8" height="4" viewBox="0 0 8 4"><path d="M0.500 0.500L2.300 2 0.500 3.500zM3 0.500L4.800 2 3 3.500z" fill="#d0d0d0"/></svg>
<div style="left:857px;top:40px;width:19.4px;height:514.5px;background:#535353;"></div>
<div style="left:861px;top:42.5px;width:11px;height:0.7px;background:#3e3e3e;"></div>
<div style="left:861px;top:43.9px;width:11px;height:0.7px;background:#3e3e3e;"></div>
<div style="left:858.6px;top:46px;width:16.4px;height:15px;background:#3a3a3a;border-radius:1.500px;box-shadow:inset 0 0 0 0.500px #2a2a2a"></div>
<svg style="left:860px;top:47px;" width="14" height="13" viewBox="0 0 14 13"><rect x="2.600" y="2" width="2.600" height="2.200" fill="none" stroke="#c6c6c6" stroke-width="0.700"/><rect x="2.600" y="5.400" width="2.600" height="2.200" fill="none" stroke="#c6c6c6" stroke-width="0.700"/><rect x="2.600" y="8.800" width="2.600" height="2.200" fill="#c6c6c6"/><path d="M7.200 3.600c3-.6 4.400 2 2.600 5.200" fill="none" stroke="#c6c6c6" stroke-width="1.100"/><path d="M6.600 1.800l.2 3.200 2.600-1.600z" fill="#c6c6c6"/></svg>
<div style="left:857px;top:62.3px;width:19.4px;height:1.2px;background:#333;"></div>
<div style="left:861px;top:65px;width:11px;height:0.7px;background:#3e3e3e;"></div>
<div style="left:861px;top:66.4px;width:11px;height:0.7px;background:#3e3e3e;"></div>
<svg style="left:860px;top:69px;" width="14" height="12" viewBox="0 0 14 12"><path d="M7 2c3.200 0 5.400 1.600 5.400 3.800 0 2-1.800 2.200-2.800 2.200-1.200 0-.8 2-2.800 2C3.600 10 1.600 8.200 1.600 6 1.600 3.600 4 2 7 2z" fill="#c6c6c6"/><circle cx="4.200" cy="6" r="0.900" fill="#535353"/><circle cx="6" cy="4" r="0.900" fill="#535353"/><circle cx="8.800" cy="4.200" r="0.900" fill="#535353"/><path d="M8 9l4.400-4" stroke="#535353" stroke-width="0.600"/></svg>
<svg style="left:860px;top:84.5px;" width="14" height="12" viewBox="0 0 14 12"><rect x="2.200" y="2" width="9.600" height="8" fill="none" stroke="#c6c6c6" stroke-width="0.800"/><path d="M2.200 6h9.600M5.400 2v8M8.600 2v8" stroke="#c6c6c6" stroke-width="0.700"/><rect x="2.600" y="6.400" width="2.600" height="3.200" fill="#c6c6c6"/><rect x="8.800" y="2.400" width="2.600" height="3.200" fill="#c6c6c6"/></svg>
<div style="left:857px;top:98.8px;width:19.4px;height:1.2px;background:#333;"></div>
<div style="left:861px;top:101.5px;width:11px;height:0.7px;background:#3e3e3e;"></div>
<div style="left:861px;top:102.9px;width:11px;height:0.7px;background:#3e3e3e;"></div>
<svg style="left:860px;top:105px;" width="14" height="13" viewBox="0 0 14 13"><circle cx="7" cy="6.500" r="4.300" fill="#8c8c8c" stroke="#c6c6c6" stroke-width="0.900"/><path d="M3.960 9.540A4.300 4.300 0 0 1 10.040 3.460z" fill="#c6c6c6"/></svg>
<svg style="left:860px;top:120.5px;" width="14" height="13" viewBox="0 0 14 13"><rect x="3" y="2" width="8.600" height="6.600" fill="#c6c6c6"/><rect x="2" y="6.400" width="5" height="4.600" fill="#535353" stroke="#c6c6c6" stroke-width="0.700"/><path d="M4.600 11.400c.8.800 2.200.6 2.600-.4" fill="none" stroke="#c6c6c6" stroke-width="0.700"/></svg>
<div style="left:857px;top:135.3px;width:19.4px;height:1.2px;background:#333;"></div>
<div style="left:861px;top:138px;width:11px;height:0.7px;background:#3e3e3e;"></div>
<div style="left:861px;top:139.4px;width:11px;height:0.7px;background:#3e3e3e;"></div>
<svg style="left:860px;top:142px;" width="14" height="13" viewBox="0 0 14 13"><path d="M7 2.200v3M4.600 3.400l2.400 2 2.400-2" fill="none" stroke="#c6c6c6" stroke-width="0.900"/><rect x="5.200" y="6.200" width="3.800" height="5" rx="0.600" fill="#c6c6c6"/><path d="M3.400 2.400l.6.600M10.600 2.400l-.6.600" stroke="#c6c6c6" stroke-width="0.800"/></svg>
<svg style="left:860px;top:156.5px;" width="14" height="12" viewBox="0 0 14 12"><path d="M1.800 3.600h10.400M1.800 8h10.400" stroke="#c6c6c6" stroke-width="0.900"/><path d="M3 2.200l2.400 1.400L3 5zM11 6.600L8.600 8 11 9.400z" fill="#c6c6c6"/><rect x="6" y="6.800" width="2.400" height="2.400" fill="#c6c6c6"/></svg>
<div style="left:857px;top:171px;width:19.4px;height:1.2px;background:#333;"></div>
<div style="left:861px;top:173.7px;width:11px;height:0.7px;background:#3e3e3e;"></div>
<div style="left:861px;top:175.1px;width:11px;height:0.7px;background:#3e3e3e;"></div>
<svg style="left:860px;top:177.5px;" width="14" height="13" viewBox="0 0 14 13"><path d="M3 3.400h2.400M4.200 2.200v2.400" stroke="#c6c6c6" stroke-width="0.700"/><path d="M6.600 3h3.200v3.600h2v2.200H4.600V6.600h2z" fill="#c6c6c6"/><path d="M4 10h8.400v1.400H4z" fill="#c6c6c6"/></svg>
<div style="left:857px;top:192.8px;width:19.4px;height:1.2px;background:#333;"></div>
<div style="left:861px;top:195.5px;width:11px;height:0.7px;background:#3e3e3e;"></div>
<div style="left:861px;top:196.9px;width:11px;height:0.7px;background:#3e3e3e;"></div>
<svg style="left:860px;top:199px;" width="14" height="13" viewBox="0 0 14 13"><text x="5.400" y="10.200" font-family="Liberation Sans,sans-serif" font-size="9.500" text-anchor="middle" fill="#c6c6c6">A</text><path d="M10.400 2v8.600" stroke="#c6c6c6" stroke-width="0.800"/></svg>
<svg style="left:860px;top:214px;" width="14" height="13" viewBox="0 0 14 13"><path d="M6.400 2h4.400M9.800 2v9M7.800 2v9" stroke="#c6c6c6" stroke-width="0.900" fill="none"/><path d="M7.800 2C3.600 1.600 3.600 7 7.800 6.600z" fill="#c6c6c6"/></svg>
<div style="left:857px;top:229px;width:19.4px;height:1.2px;background:#333;"></div>
<div style="left:861px;top:231.7px;width:11px;height:0.7px;background:#3e3e3e;"></div>
<div style="left:861px;top:233.1px;width:11px;height:0.7px;background:#3e3e3e;"></div>
<svg style="left:860px;top:235.5px;" width="14" height="13" viewBox="0 0 14 13"><path d="M2.600 3l8.800 7M2.600 10l8.800-7" stroke="#c6c6c6" stroke-width="1"/><circle cx="3" cy="3" r="1.300" fill="#c6c6c6"/><path d="M9.600 9.200l2.600 1.600-2.800.6z" fill="#c6c6c6"/></svg>
<div style="left:857px;top:250.5px;width:19.4px;height:1.2px;background:#333;"></div>
<div style="left:878.4px;top:40px;width:145.6px;height:256.6px;background:#535353;"></div>
<div style="left:878.4px;top:40px;width:145.6px;height:8.8px;background:#3e3e3e;"></div>
<div style="left:878.8px;top:40px;width:19.4px;height:9px;background:#535353;border-radius:1px 1px 0 0"></div>
<span class="t" style="left:882px;top:42.00px;font-size:6.4px;color:#e6e6e6;transform:scaleX(0.994);">属性</span>
<svg style="left:1013px;top:42px;" width="9" height="6" viewBox="0 0 9 6"><path d="M0.600 2h2.400L1.800 3.600z" fill="#d6d6d6"/><path d="M3.800 1.400h4.400M3.800 3h4.400M3.800 4.600h4.400" stroke="#d6d6d6" stroke-width="0.800"/></svg>
<span class="t" style="left:883px;top:54.40px;font-size:6.6px;color:#e8e8e8;transform:scaleX(0.736);">プロパティなし</span>
<div style="left:878.4px;top:66px;width:145.6px;height:0.7px;background:#474747;"></div>
<div style="left:878.4px;top:66.7px;width:145.6px;height:0.7px;background:#5e5e5e;"></div>
<div style="left:878.4px;top:67.1px;width:145.6px;height:219.5px;background:#525252;"></div>
<div style="left:1016.4px;top:67.4px;width:7.6px;height:219.2px;background:#474747;"></div>
<div style="left:878.4px;top:286.6px;width:145.6px;height:10px;background:#535353;"></div>
<div style="left:878.4px;top:286.6px;width:145.6px;height:0.6px;background:#3c3c3c;"></div>
<svg style="left:1000px;top:287.6px;" width="10" height="9" viewBox="0 0 10 9"><path d="M2.400 2.800h5.200l-.5 5.200H2.900z" fill="#6e6e6e"/><path d="M1.800 2.400h6.400M3.800 1.400h2.400" stroke="#747474" stroke-width="0.800"/></svg>
<div style="left:878.4px;top:298.3px;width:145.6px;height:256.2px;background:#535353;"></div>
<div style="left:878.4px;top:298.3px;width:145.6px;height:9.3px;background:#3e3e3e;"></div>
<div style="left:893.4px;top:298.3px;width:26.8px;height:9.5px;background:#535353;border-radius:1px 1px 0 0"></div>
<span class="t" style="left:880.6px;top:300.30px;font-size:6.4px;color:#8e8e8e;transform:scaleX(1.028);">3D</span>
<span class="t" style="left:897.3px;top:300.30px;font-size:6.4px;color:#e6e6e6;transform:scaleX(0.757);">レイヤー</span>
<span class="t" style="left:923.8px;top:300.30px;font-size:6.4px;color:#909090;transform:scaleX(0.746);">チャンネル</span>
<svg style="left:1013px;top:300.3px;" width="9" height="6" viewBox="0 0 9 6"><path d="M0.600 2h2.400L1.800 3.600z" fill="#d6d6d6"/><path d="M3.800 1.400h4.400M3.800 3h4.400M3.800 4.600h4.400" stroke="#d6d6d6" stroke-width="0.800"/></svg>
<div style="left:881px;top:310.3px;width:33px;height:9.4px;background:linear-gradient(#707070,#5b5b5b);border-radius:1.500px;box-shadow:0 0 0 0.500px #333"></div>
<svg style="left:882.5px;top:311.5px;" width="8" height="7" viewBox="0 0 8 7"><circle cx="3" cy="3" r="1.900" fill="none" stroke="#d8d8d8" stroke-width="0.800"/><path d="M4.400 4.400l2 2" stroke="#d8d8d8" stroke-width="0.900"/></svg>
<span class="t" style="left:891.8px;top:311.80px;font-size:6.4px;color:#f0f0f0;transform:scaleX(0.978);">種類</span>
<svg style="left:907.5px;top:311px;" width="6" height="8" viewBox="0 0 6 8"><path d="M1.400 3.200L3 1.200l1.600 2zM1.400 4.800L3 6.800l1.600-2z" fill="#e6e6e6"/></svg>
<svg style="left:926.3px;top:310px;" width="10" height="10" viewBox="0 0 10 10"><rect x="1.200" y="2" width="7.600" height="6" fill="none" stroke="#b6b6b6" stroke-width="0.800"/><path d="M2 7.200l2-2.400 1.400 1.400 1-.8 1.600 1.800z" fill="#b6b6b6"/></svg>
<svg style="left:938.7px;top:310px;" width="10" height="10" viewBox="0 0 10 10"><circle cx="5" cy="5" r="3.300" fill="#777" stroke="#b6b6b6" stroke-width="0.800"/><path d="M2.660 7.340A3.300 3.300 0 0 1 7.340 2.660z" fill="#b6b6b6"/></svg>
<svg style="left:951.4px;top:310px;" width="10" height="10" viewBox="0 0 10 10"><text x="5" y="8.400" font-family="Liberation Serif,serif" font-size="9.500" text-anchor="middle" fill="#b6b6b6">T</text></svg>
<svg style="left:964.7px;top:310px;" width="10" height="10" viewBox="0 0 10 10"><rect x="2" y="2" width="6" height="6" fill="none" stroke="#b6b6b6" stroke-width="0.700"/><rect x="1" y="1" width="2" height="2" fill="#b6b6b6"/><rect x="7" y="1" width="2" height="2" fill="#b6b6b6"/><rect x="1" y="7" width="2" height="2" fill="#b6b6b6"/><rect x="7" y="7" width="2" height="2" fill="#b6b6b6"/></svg>
<svg style="left:977.3px;top:310px;" width="10" height="10" viewBox="0 0 10 10"><path d="M2.600 1.600h3.600l1.800 1.800v5H2.600z" fill="none" stroke="#b6b6b6" stroke-width="0.800"/><rect x="1.200" y="5.400" width="3.800" height="3.200" fill="#b6b6b6"/></svg>
<svg style="left:999.5px;top:309.5px;" width="6" height="11" viewBox="0 0 6 11"><rect x="1" y="0.800" width="4" height="9" rx="1" fill="#2e2e2e"/><rect x="1.400" y="1.200" width="3.200" height="4" rx="0.800" fill="#b8b8b8"/></svg>
<div style="left:881px;top:325.3px;width:57.2px;height:9.6px;background:linear-gradient(#707070,#5b5b5b);border-radius:1.500px;box-shadow:0 0 0 0.500px #333"></div>
<span class="t" style="left:884.4px;top:327.10px;font-size:6.4px;color:#f0f0f0;transform:scaleX(0.947);">通常</span>
<svg style="left:931.5px;top:326px;" width="6" height="8" viewBox="0 0 6 8"><path d="M1.400 3.200L3 1.200l1.600 2zM1.400 4.800L3 6.800l1.600-2z" fill="#e6e6e6"/></svg>
<span class="t" style="left:944px;top:327.10px;font-size:6.4px;color:#e2e2e2;transform:scaleX(0.996);">不透明度 :</span>
<div style="left:976.5px;top:325.3px;width:18.3px;height:9.8px;background:#353535;border-radius:1px"></div>
<div style="left:995.3px;top:325.3px;width:9.6px;height:9.8px;background:linear-gradient(#707070,#5b5b5b);border-radius:1.500px;box-shadow:0 0 0 0.500px #333"></div>
<svg style="left:997.6px;top:328.3px;" width="5" height="4" viewBox="0 0 5 4"><path d="M0.800 0.800h3.400L2.500 3z" fill="#e0e0e0"/></svg>
<span class="t" style="left:978px;top:327.30px;font-size:6.2px;color:#ececec;transform:scaleX(0.916);">100%</span>
<div style="left:976.5px;top:340px;width:18.3px;height:9.8px;background:#353535;border-radius:1px"></div>
<div style="left:995.3px;top:340px;width:9.6px;height:9.8px;background:linear-gradient(#707070,#5b5b5b);border-radius:1.500px;box-shadow:0 0 0 0.500px #333"></div>
<svg style="left:997.6px;top:343px;" width="5" height="4" viewBox="0 0 5 4"><path d="M0.800 0.800h3.400L2.500 3z" fill="#e0e0e0"/></svg>
<span class="t" style="left:978px;top:342.00px;font-size:6.2px;color:#ececec;transform:scaleX(0.916);">100%</span>
<span class="t" style="left:881.7px;top:341.80px;font-size:6.4px;color:#e2e2e2;transform:scaleX(0.717);">ロック :</span>
<svg style="left:901.5px;top:340.5px;" width="9" height="9" viewBox="0 0 9 9"><rect x="1.400" y="1.400" width="6.200" height="6.200" fill="#8c8c8c"/><path d="M1.400 1.400h2.070v2.070H1.400zM5.530 1.400H7.600v2.070H5.530zM3.470 3.470h2.060v2.060H3.470zM1.400 5.530h2.070V7.600H1.400zM5.530 5.530H7.600V7.600H5.530z" fill="#d8d8d8"/></svg>
<svg style="left:912.5px;top:340px;" width="11" height="10" viewBox="0 0 11 10"><path d="M9.800 0.800L4.600 6.200l.8.800z" fill="#dcdcdc"/><path d="M4 6.600l1.200 1.200c-.6 1.200-2 1.600-3.600 1.400 1-.5 1-1.900 2.400-2.600z" fill="#dcdcdc"/></svg>
<svg style="left:924.5px;top:340.5px;" width="9" height="9" viewBox="0 0 9 9"><path d="M4.500 1.400v6.200M1.400 4.500h6.200" stroke="#c8c8c8" stroke-width="0.700"/><path d="M4.500 0.600l-1 1.300h2zM4.500 8.400l-1-1.300h2zM0.600 4.500l1.300-1v2zM8.400 4.500l-1.300-1v2z" fill="#c8c8c8"/></svg>
<svg style="left:937.3px;top:340.2px;" width="9" height="9" viewBox="0 0 9 9"><rect x="1.800" y="4" width="5.400" height="4" fill="#dcdcdc"/><path d="M3 4V2.800c0-1.800 3-1.800 3 0V4" fill="none" stroke="#dcdcdc" stroke-width="0.900"/></svg>
<span class="t" style="left:958.6px;top:341.80px;font-size:6.4px;color:#e2e2e2;transform:scaleX(0.881);">塗り :</span>
<div style="left:878.4px;top:352.4px;width:145.6px;height:1px;background:#3a3a3a;"></div>
<div style="left:878.4px;top:353.4px;width:138.2px;height:191px;background:#4a4a4a;"></div>
<div style="left:1016.6px;top:353.4px;width:7.4px;height:191px;background:#444;"></div>
<div style="left:879.2px;top:353.5px;width:137.4px;height:16.3px;background:#535353;"></div>
<div style="left:879.2px;top:369.8px;width:137.4px;height:0.7px;background:#3e3e3e;"></div>
<div style="left:879.2px;top:369.8px;width:137.4px;height:16.3px;background:#535353;"></div>
<div style="left:893.8px;top:369.8px;width:122.8px;height:16.3px;background:#576c8b;"></div>
<div style="left:879.2px;top:386.1px;width:137.4px;height:0.7px;background:#3e3e3e;"></div>
<div style="left:879.2px;top:386.4px;width:137.4px;height:16.3px;background:#535353;"></div>
<div style="left:879.2px;top:402.7px;width:137.4px;height:0.7px;background:#3e3e3e;"></div>
<div style="left:893.6px;top:353.5px;width:0.6px;height:49.8px;background:#434343;"></div>
<div style="left:893.6px;top:369.8px;width:0.6px;height:16.3px;background:#4a5c78;"></div>
<svg style="left:882.2px;top:358.8px;" width="8" height="6" viewBox="0 0 8 6"><path d="M0.600 3C2 1 6 1 7.400 3 6 5 2 5 0.600 3z" fill="none" stroke="#bcbcbc" stroke-width="0.700"/><circle cx="4" cy="2.900" r="1.200" fill="#c6c6c6"/></svg>
<svg style="left:882.2px;top:375.2px;" width="8" height="6" viewBox="0 0 8 6"><path d="M0.600 3C2 1 6 1 7.400 3 6 5 2 5 0.600 3z" fill="none" stroke="#bcbcbc" stroke-width="0.700"/><circle cx="4" cy="2.900" r="1.200" fill="#c6c6c6"/></svg>
<div style="left:883.3px;top:391.7px;width:5.8px;height:5.8px;background:#4f4f4f;box-shadow:0 0 0 0.600px #444"></div>
<div style="left:896.2px;top:355.5px;width:16.2px;height:11.8px;background:repeating-conic-gradient(#d4d4d4 0 25%,#fff 0 50%) 0 0/3.400px 3.400px;box-shadow:0 0 0 0.600px #2c2c2c"></div>
<svg style="left:894.6px;top:370.6px;" width="19.4" height="15" viewBox="0 0 19.4 15"><path d="M0.500 3.600V0.500h3.600M15.300 0.500h3.600v3.100M18.900 11.400v3.100h-3.600M4.100 14.500H0.500v-3.100" fill="none" stroke="#e8e8e8" stroke-width="0.900"/></svg>
<div style="left:896.2px;top:372.2px;width:16.2px;height:11.8px;background:repeating-conic-gradient(#d4d4d4 0 25%,#fff 0 50%) 0 0/3.400px 3.400px;"></div>
<svg style="left:897.7px;top:374.2px;" width="13.2" height="7.2" viewBox="0 0 16.200 11.800" preserveAspectRatio="none"><rect width="16.200" height="11.800" fill="#2c4560"/><rect y="0.600" width="8" height="3" fill="#c07040"/><rect x="8.600" y="0.600" width="7.600" height="3" fill="#c99a66"/><rect y="4.300" width="3.600" height="3" fill="#c99a66"/><rect x="4.200" y="4.300" width="8.600" height="3" fill="#a04a2c"/><rect x="13.400" y="4.300" width="2.800" height="3" fill="#c99a66"/><rect y="8" width="8" height="3" fill="#c69664"/><rect x="8.600" y="8" width="7.600" height="3" fill="#c69664"/></svg>
<svg style="left:896.2px;top:388.7px;" width="16.2" height="11.8" viewBox="0 0 16.2 11.8"><rect width="16.200" height="11.800" fill="#7a5038"/><rect y="0.500" width="8" height="3.200" fill="#c07844"/><rect x="8.500" y="0.500" width="7.700" height="3.200" fill="#c88e58"/><rect y="4.300" width="3.600" height="3.200" fill="#c88e58"/><rect x="4.100" y="4.300" width="8.700" height="3.200" fill="#a85630"/><rect x="13.300" y="4.300" width="2.900" height="3.200" fill="#c88e58"/><rect y="8.100" width="8" height="3.200" fill="#c68a54"/><rect x="8.500" y="8.100" width="7.700" height="3.200" fill="#c68a54"/></svg>
<span class="t" style="left:918.7px;top:359.00px;font-size:6.4px;color:#e6e6e6;transform:scaleX(0.801);">レイヤー 1</span>
<span class="t" style="left:918.7px;top:375.40px;font-size:6.4px;color:#f0f0f0;transform:scaleX(0.835);">背景 のコピー</span>
<span class="t" style="left:919px;top:392.10px;font-size:6.4px;color:#f0f0f0;transform:scaleX(0.986);font-style:italic;font-weight:bold">背景</span>
<svg style="left:1001px;top:390.5px;" width="9" height="9" viewBox="0 0 9 9"><rect x="1.800" y="4" width="5.400" height="4" fill="none" stroke="#c8c8c8" stroke-width="0.800"/><path d="M3 4V2.800c0-1.800 3-1.800 3 0V4" fill="none" stroke="#c8c8c8" stroke-width="0.800"/></svg>
<div style="left:878.4px;top:544.4px;width:145.6px;height:10.2px;background:#535353;"></div>
<div style="left:878.4px;top:544.4px;width:145.6px;height:0.6px;background:#3a3a3a;"></div>
<svg style="left:914.7px;top:546px;" width="10" height="8" viewBox="0 0 10 8"><rect x="1" y="2.800" width="4" height="2.400" rx="1.200" fill="none" stroke="#6e6e6e" stroke-width="0.800"/><rect x="5" y="2.800" width="4" height="2.400" rx="1.200" fill="none" stroke="#6e6e6e" stroke-width="0.800"/></svg>
<span class="t" style="left:931.4px;top:545.40px;font-size:8px;color:#cacaca;transform:scaleX(1.000);font-style:italic;font-family:'Liberation Serif',serif">fx</span>
<svg style="left:938.4px;top:551px;" width="3" height="3" viewBox="0 0 3 3"><path d="M0.200 0.600h2.400L1.400 2.400z" fill="#b4b4b4"/></svg>
<svg style="left:943.9px;top:545.5px;" width="10" height="9" viewBox="0 0 10 9"><rect x="1.200" y="1.800" width="7.600" height="6" fill="#a8a8a8"/><circle cx="5" cy="4.800" r="1.700" fill="#535353"/></svg>
<svg style="left:958px;top:545.5px;" width="10" height="9" viewBox="0 0 10 9"><circle cx="5" cy="4.600" r="3.200" fill="#777" stroke="#a8a8a8" stroke-width="0.800"/><path d="M2.740 6.860A3.200 3.200 0 0 1 7.260 2.340z" fill="#a8a8a8"/></svg>
<svg style="left:967.4px;top:551px;" width="3" height="3" viewBox="0 0 3 3"><path d="M0.200 0.600h2.400L1.400 2.400z" fill="#b4b4b4"/></svg>
<svg style="left:972px;top:545.5px;" width="10" height="9" viewBox="0 0 10 9"><path d="M1.200 1.800h3l.8 1h3.800v5H1.200z" fill="#a8a8a8"/></svg>
<svg style="left:986px;top:545.5px;" width="10" height="9" viewBox="0 0 10 9"><path d="M2 1.400h6v6.200H5.200L2 4.600z" fill="#a8a8a8"/><path d="M2 4.600h3.200v3" fill="#dcdcdc"/></svg>
<svg style="left:1000.6px;top:545.5px;" width="10" height="9" viewBox="0 0 10 9"><path d="M2.400 2.800h5.200l-.5 5.200H2.900z" fill="#8c8c8c"/><path d="M1.800 2.400h6.400M3.800 1.400h2.400" stroke="#949494" stroke-width="0.800"/></svg>
<div style="left:0px;top:555px;width:1024px;height:22px;background:#05060a;"></div>
<div style="left:25.4px;top:555.2px;width:184.2px;height:21.8px;background:#3b3b3b;"></div>
<svg style="left:6.6px;top:561px;" width="11" height="10" viewBox="0 0 11 10"><path d="M0.600 1.800l4-.6v3.600h-4zM5.200 1.100l5-.7v4.400h-5zM0.600 5.400h4V9l-4-.6zM5.200 5.400h5v4.400l-5-.7z" fill="#fff"/></svg>
<span class="t" style="left:30.3px;top:562.30px;font-size:8.2px;color:#808080;transform:scaleX(0.916);">WebとWindowsを検索</span>
<svg style="left:215px;top:560.5px;" width="13" height="11" viewBox="0 0 13 11"><rect x="3.400" y="2.200" width="6.200" height="6.200" fill="none" stroke="#e8e8e8" stroke-width="0.900"/><path d="M1.400 3.400v3.800M11.600 3.400v3.800" stroke="#e8e8e8" stroke-width="0.900"/></svg>
<div style="left:238.5px;top:575.5px;width:20.6px;height:1.5px;background:#8ec5ee;"></div>
<svg style="left:242.3px;top:559.4px;" width="13" height="13" viewBox="0 0 13 13"><path d="M1 2.600h4l1 1.200h6v7H1z" fill="#e8b84a"/><path d="M1 5h11v5.800H1z" fill="#f6d674"/><rect x="3.400" y="7.400" width="6.200" height="3.400" fill="#5aa8e0"/></svg>
<div style="left:263.7px;top:575.5px;width:20.6px;height:1.5px;background:#8ec5ee;"></div>
<svg style="left:267.5px;top:559.4px;" width="13" height="13" viewBox="0 0 13 13"><path d="M1.600 6.200C2 2.800 4.400 1.400 6.800 1.400c3 0 4.800 2.200 4.800 5.200H4.800c.2 1.800 2 2.800 3.800 2.800 1 0 2-.3 2.800-.8v2.200c-1 .6-2.200.8-3.400.8-3 0-5.200-1.800-5.200-4.800 0-1.200.6-2.400 1.600-3.200-1 .6-2 1.600-2.800 2.600zM4.800 5h4c0-1.200-.8-2-2-2s-1.900.9-2 2z" fill="#2a8ae2"/></svg>
<div style="left:290.5px;top:575.5px;width:20.6px;height:1.5px;background:#8ec5ee;"></div>
<svg style="left:294.3px;top:559.4px;" width="13" height="13" viewBox="0 0 13 13"><circle cx="6.500" cy="6.500" r="5.400" fill="#e2453c"/><path d="M6.500 6.500L1.820 3.800A5.400 5.400 0 0 0 6.500 11.900l2.700-4.680z" fill="#3aa757"/><path d="M6.500 6.500l2.700.72L6.500 11.900A5.400 5.400 0 0 0 11.180 3.800H6.500z" fill="#f6c02c"/><circle cx="6.500" cy="6.500" r="2.500" fill="#fff"/><circle cx="6.500" cy="6.500" r="1.900" fill="#4a8af4"/></svg>
<svg style="left:320.5px;top:559.4px;" width="13" height="13" viewBox="0 0 13 13"><path d="M1.200 1.600h10.600L6.500 12.200z" fill="#f4f0ea"/><path d="M1.200 1.600h3.400l1.900 6.600 1.900-6.600h3.400L6.500 12.200z" fill="#f08a24"/><path d="M8.400 1.600h3.400L8 9.600z" fill="#f6b060"/></svg>
<svg style="left:346.5px;top:559.4px;" width="13" height="13" viewBox="0 0 13 13"><rect x="1" y="0.800" width="11" height="11.600" fill="#2aa6a6"/><path d="M3 10.600V3.200l3 4.200 3.400-5v8.200" fill="none" stroke="#c8f0ee" stroke-width="1.300"/></svg>
<svg style="left:372.5px;top:559.4px;" width="13" height="13" viewBox="0 0 13 13"><path d="M1.600 3.800h9.800l-.8 7.600H2.400z" fill="#fff"/><path d="M4.400 3.800V2.600c0-1.600 4.200-1.600 4.200 0v1.200" fill="none" stroke="#fff" stroke-width="0.900"/><path d="M4.200 6l2-.3v1.700h-2zM6.600 5.600l2.200-.3v2.100H6.600zM4.200 7.800h2v1.700l-2-.3zM6.600 7.800h2.200v2.100l-2.200-.3z" fill="#05060a"/></svg>
<svg style="left:399.0px;top:559.4px;" width="13" height="13" viewBox="0 0 13 13"><rect x="1.400" y="1.400" width="10.200" height="10.200" fill="#d0d0d0"/><path d="M3 10.400l2-6 1.600 3 1.400-4.600 2 7.600z" fill="#3a3a3a"/><circle cx="4" cy="3.600" r="1" fill="#3a3a3a"/></svg>
<svg style="left:424.5px;top:559.4px;" width="13" height="13" viewBox="0 0 13 13"><rect x="1.400" y="1.400" width="10.200" height="10.200" fill="#d0d0d0"/><path d="M3 10.400l2-6 1.600 3 1.400-4.600 2 7.600z" fill="#3a3a3a"/><circle cx="4" cy="3.600" r="1" fill="#3a3a3a"/></svg>
<svg style="left:451.3px;top:559px;" width="13" height="14" viewBox="0 0 13 14"><path d="M1.400 0.800h10.200v9.400L6.500 13 1.400 10.200z" fill="#3c3c3c" stroke="#d8d8d8" stroke-width="0.800"/><text x="6.500" y="7" font-family="Liberation Sans,sans-serif" font-weight="bold" font-size="5" text-anchor="middle" fill="#f0f0f0" textLength="8.600" lengthAdjust="spacingAndGlyphs">EPIC</text><path d="M3.400 8.800h6.200" stroke="#d0d0d0" stroke-width="0.600"/></svg>
<svg style="left:477.9px;top:559.4px;" width="13" height="13" viewBox="0 0 13 13"><path d="M2 10.600l4.800-8 3.600 2.200-4.800 8z" fill="#e8e4dc"/><path d="M6.800 2.600l2.400-1.800 2.600 1.600-1.400 2.600z" fill="#d84a30"/><path d="M2 10.600l-.6 2.200 2.200-.6z" fill="#e0a030"/></svg>
<div style="left:500.2px;top:575.5px;width:20.6px;height:1.5px;background:#8ec5ee;"></div>
<svg style="left:504.0px;top:559.4px;" width="13" height="13" viewBox="0 0 13 13"><circle cx="6" cy="6.200" r="4.800" fill="#f4fbff" stroke="#38b0ee" stroke-width="1.300"/><text x="6" y="9" font-family="Liberation Sans,sans-serif" font-weight="bold" font-size="7.600" text-anchor="middle" fill="#1e9ade">S</text><circle cx="10.200" cy="10.200" r="2.800" fill="#e8283c"/><path d="M9 9l2.400 2.400M11.400 9L9 11.400" stroke="#fff" stroke-width="0.700"/></svg>
<div style="left:525.7px;top:575.5px;width:20.6px;height:1.5px;background:#8ec5ee;"></div>
<svg style="left:529.5px;top:559.4px;" width="13" height="13" viewBox="0 0 13 13"><rect x="0.800" y="0.800" width="11.400" height="11.400" rx="1.200" fill="#4aa832"/><path d="M4 3.200h3.600c1.600 0 2 1.600 2 3.400 0 2-.4 3.600-1.600 3.600H6.800V8.600h1c.4-1.600 0-2.200-1.200-2.200-1.400 0-1.800 1-2 2.200-.8-.6-1.400-2-1.400-3.400z" fill="#2a5a20"/></svg>
<div style="left:549.9px;top:555.2px;width:25.2px;height:21.8px;background:#34363c;"></div>
<div style="left:549.9px;top:575.5px;width:25.2px;height:1.5px;background:#8ec5ee;"></div>
<svg style="left:556.0px;top:559.4px;" width="13" height="13" viewBox="0 0 13 13"><rect x="1" y="1" width="11" height="11" fill="#1c2a5a" stroke="#7aa8f0" stroke-width="0.700"/><text x="6.500" y="9" font-family="Liberation Sans,sans-serif" font-weight="bold" font-size="6.400" text-anchor="middle" fill="#8ab8ff">Ps</text></svg>
<svg style="left:887px;top:562.5px;" width="9" height="7" viewBox="0 0 9 7"><path d="M1.400 5L4.500 2l3.100 3" fill="none" stroke="#fff" stroke-width="0.900"/></svg>
<svg style="left:899.4px;top:561px;" width="10" height="10" viewBox="0 0 10 10"><rect x="1.400" y="1.400" width="7.200" height="7.200" rx="1.400" fill="#3fae4a"/><path d="M3.200 3h1.600v1.600H3.200zM5.400 3H7v1.600H5.400zM3.200 5.200h1.600v1.600H3.200zM5.400 5.200H7v1.600H5.400z" fill="#fff"/></svg>
<svg style="left:911.8px;top:561.5px;" width="11" height="10" viewBox="0 0 11 10"><rect x="2.800" y="1.400" width="7.200" height="5" fill="none" stroke="#fff" stroke-width="0.800"/><path d="M5 8.400h3M6.400 6.400v2" stroke="#fff" stroke-width="0.800"/><rect x="0.800" y="4" width="2.800" height="4.600" fill="#05060a" stroke="#fff" stroke-width="0.700"/></svg>
<svg style="left:924.2px;top:561.5px;" width="11" height="10" viewBox="0 0 11 10"><path d="M1 3.800h1.800L5 1.800v6.400L2.800 6.200H1z" fill="#fff"/><path d="M6.400 3.400c.8.800.8 2.400 0 3.200M7.800 2.200c1.600 1.600 1.600 4 0 5.600" fill="none" stroke="#fff" stroke-width="0.700"/></svg>
<svg style="left:937.4px;top:561px;" width="11" height="11" viewBox="0 0 11 11"><path d="M1.200 1.400h8.400v6.200H4.600L2.800 9.400V7.600H1.200z" fill="none" stroke="#fff" stroke-width="0.800"/><path d="M2.800 3.400h5.200M2.800 5.200h5.200" stroke="#fff" stroke-width="0.700"/><circle cx="8.400" cy="8.200" r="2" fill="#05060a" stroke="#fff" stroke-width="0.600"/></svg>
<span class="t" style="left:951.8px;top:561.60px;font-size:9.4px;color:#fff;transform:scaleX(1.000);">A</span>
<span class="t" style="left:975px;top:558.80px;font-size:6.6px;color:#fff;transform:scaleX(0.890);">21:34</span>
<span class="t" style="left:966.4px;top:567.40px;font-size:6.6px;color:#fff;transform:scaleX(0.957);">2016/06/30</span>
<svg style="left:1003.5px;top:559.5px;" width="20" height="14" viewBox="0 0 20 14"><path d="M10.400 4.400c1.400-.4 2.600 0 3.600 1.200 1-1.600.8-3.400-.4-4.800 2.400.4 4.200 2.200 4.600 4.800.6.200 1.200.2 1.600 0-.8 2.400-3.400 3.600-5.600 3z" fill="#fff"/><path d="M4 11.600c-2.600 0-2.800-3.400-.4-3.800.2-2.600 3.800-3.200 4.800-1 2-.6 3.400 1 3 2.400 1.600.2 1.600 2.400-.2 2.400z" fill="#05060a" stroke="#fff" stroke-width="0.900"/></svg>
</div>
</body>
</html>
